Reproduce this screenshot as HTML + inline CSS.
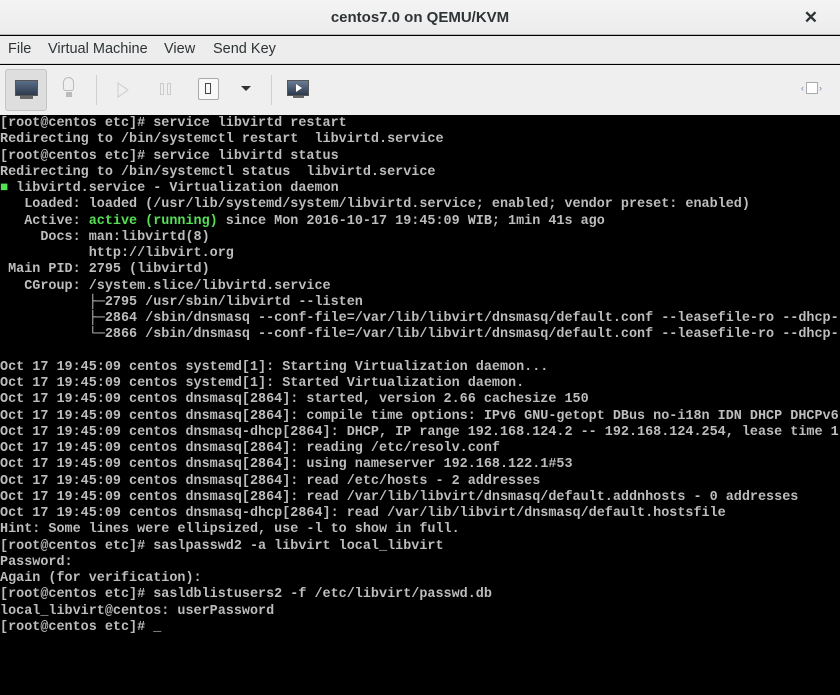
<!DOCTYPE html>
<html><head><meta charset="utf-8"><style>
*{margin:0;padding:0;box-sizing:border-box}
body{width:840px;height:695px;overflow:hidden;background:#000;font-family:"Liberation Sans",sans-serif}
#title{position:absolute;left:0;top:0;width:840px;height:35px;background:linear-gradient(#f4f4f4,#ececec);border-bottom:1px solid #b8b8b8;text-align:center;font-size:15px;line-height:35px;color:#2e3436;font-weight:bold}
#close{position:absolute;right:22px;top:0;font-size:17px;color:#2e3436}
#menu{position:absolute;left:0;top:36px;width:840px;height:28px;background:#ededed;border-bottom:1px solid #d6d6d6;font-size:14.5px;color:#2e3436;line-height:27px}
#menu span{position:absolute}
#tool{position:absolute;left:0;top:65px;width:840px;height:50px;background:#efefef}
#term{position:absolute;left:0;top:115px;width:840px;height:580px;background:#000;font-family:"Liberation Mono",monospace;font-size:13.45px;line-height:16.25px;color:#bdbdbd;white-space:pre;padding-top:1px;letter-spacing:0;font-weight:bold}
.g{color:#55e055}
</style></head><body>
<div id="title">centos7.0 on QEMU/KVM<span id="close">✕</span></div>
<div id="menu"><span style="left:8px">File</span><span style="left:48px">Virtual Machine</span><span style="left:164px">View</span><span style="left:213px">Send Key</span></div>
<div id="tool">
<div style="position:absolute;left:5px;top:4px;width:42px;height:42px;background:#dedede;border:1px solid #c4c4c4;border-radius:3px"></div>
<div style="position:absolute;left:15px;top:15px;width:23px;height:16px;background:linear-gradient(#5a6e88,#2c3a4e);border:1px solid #555"></div>
<div style="position:absolute;left:20px;top:31px;width:13px;height:3px;background:#666"></div>
<div style="position:absolute;left:63px;top:12px;width:11px;height:14px;border:1px solid #bbb;border-radius:6px 6px 3px 3px"></div>
<div style="position:absolute;left:66px;top:27px;width:6px;height:5px;background:#bbb"></div>
<div style="position:absolute;left:96px;top:10px;width:1px;height:30px;background:#d0d0d0"></div>
<svg style="position:absolute;left:116px;top:17px" width="14" height="16"><path d="M2 1 L12 8 L2 15Z" fill="none" stroke="#ccc"/></svg>
<div style="position:absolute;left:160px;top:18px;width:4px;height:12px;border:1px solid #ccc"></div>
<div style="position:absolute;left:167px;top:18px;width:4px;height:12px;border:1px solid #ccc"></div>
<div style="position:absolute;left:198px;top:13px;width:21px;height:22px;background:#f8f8f8;border:1px solid #aaa;border-radius:2px"></div>
<div style="position:absolute;left:205px;top:18px;width:6px;height:11px;border:1px solid #444"></div>
<svg style="position:absolute;left:241px;top:21px" width="10" height="6"><path d="M0 0H10L5 5Z" fill="#333"/></svg>
<div style="position:absolute;left:271px;top:10px;width:1px;height:30px;background:#d0d0d0"></div>
<div style="position:absolute;left:287px;top:15px;width:22px;height:16px;background:linear-gradient(#6a7c94,#2c3a4e);border:1px solid #555"></div>
<svg style="position:absolute;left:295px;top:19px" width="8" height="8"><path d="M1 0L7 4L1 8Z" fill="#fff"/></svg>
<div style="position:absolute;left:293px;top:31px;width:11px;height:2px;background:#666"></div>
<div style="position:absolute;left:806px;top:17px;width:12px;height:12px;background:#fff;border:1px solid #aaa"></div>
<div style="position:absolute;left:801px;top:17px;font-size:9px;color:#6a8ab8;line-height:12px">‹</div>
<div style="position:absolute;left:819px;top:17px;font-size:9px;color:#6a8ab8;line-height:12px">›</div>
</div>
<div id="term">[root@centos etc]# service libvirtd restart
Redirecting to /bin/systemctl restart  libvirtd.service
[root@centos etc]# service libvirtd status
Redirecting to /bin/systemctl status  libvirtd.service
<span class="g">■</span> libvirtd.service - Virtualization daemon
   Loaded: loaded (/usr/lib/systemd/system/libvirtd.service; enabled; vendor preset: enabled)
   Active: <span class="g">active (running)</span> since Mon 2016-10-17 19:45:09 WIB; 1min 41s ago
     Docs: man:libvirtd(8)
           http://libvirt.org
 Main PID: 2795 (libvirtd)
   CGroup: /system.slice/libvirtd.service
           ├─2795 /usr/sbin/libvirtd --listen
           ├─2864 /sbin/dnsmasq --conf-file=/var/lib/libvirt/dnsmasq/default.conf --leasefile-ro --dhcp-
           └─2866 /sbin/dnsmasq --conf-file=/var/lib/libvirt/dnsmasq/default.conf --leasefile-ro --dhcp-

Oct 17 19:45:09 centos systemd[1]: Starting Virtualization daemon...
Oct 17 19:45:09 centos systemd[1]: Started Virtualization daemon.
Oct 17 19:45:09 centos dnsmasq[2864]: started, version 2.66 cachesize 150
Oct 17 19:45:09 centos dnsmasq[2864]: compile time options: IPv6 GNU-getopt DBus no-i18n IDN DHCP DHCPv6
Oct 17 19:45:09 centos dnsmasq-dhcp[2864]: DHCP, IP range 192.168.124.2 -- 192.168.124.254, lease time 1
Oct 17 19:45:09 centos dnsmasq[2864]: reading /etc/resolv.conf
Oct 17 19:45:09 centos dnsmasq[2864]: using nameserver 192.168.122.1#53
Oct 17 19:45:09 centos dnsmasq[2864]: read /etc/hosts - 2 addresses
Oct 17 19:45:09 centos dnsmasq[2864]: read /var/lib/libvirt/dnsmasq/default.addnhosts - 0 addresses
Oct 17 19:45:09 centos dnsmasq-dhcp[2864]: read /var/lib/libvirt/dnsmasq/default.hostsfile
Hint: Some lines were ellipsized, use -l to show in full.
[root@centos etc]# saslpasswd2 -a libvirt local_libvirt
Password:
Again (for verification):
[root@centos etc]# sasldblistusers2 -f /etc/libvirt/passwd.db
local_libvirt@centos: userPassword
[root@centos etc]# _</div>
</body></html>
